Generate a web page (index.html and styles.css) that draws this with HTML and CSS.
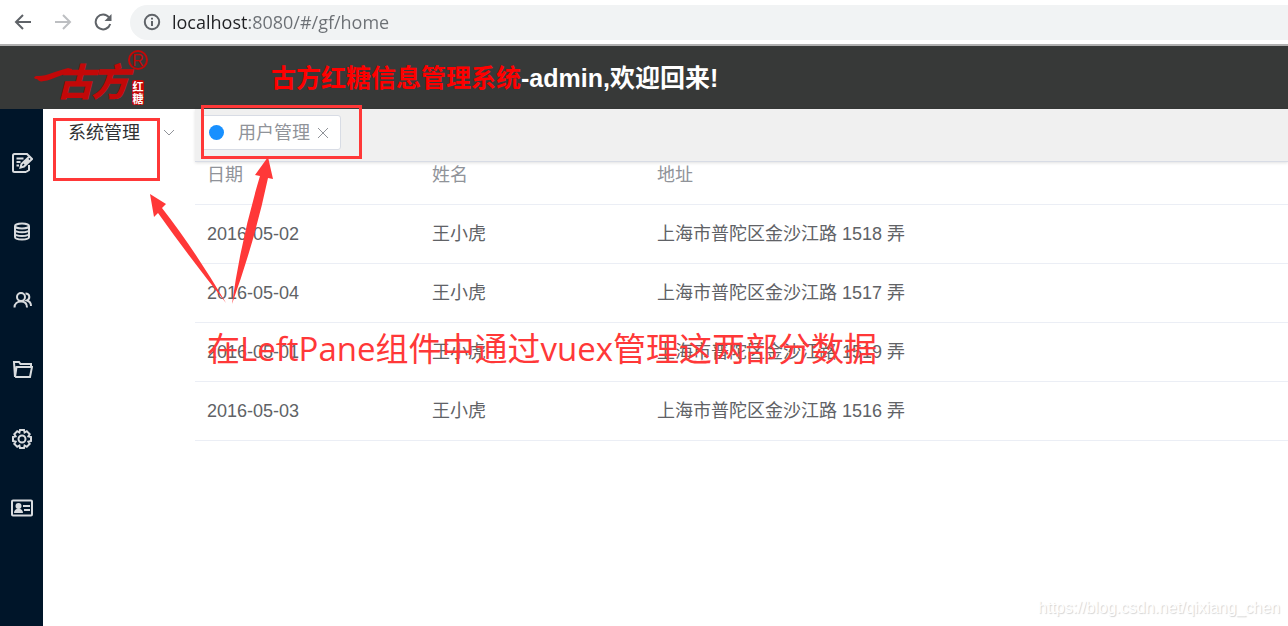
FILE: index.html
```
<!DOCTYPE html>
<html lang="zh-CN">
<head>
    <meta charset="UTF-8">
    <meta name="viewport" content="width=device-width, initial-scale=1.0">
    <title>古方红糖信息管理系统</title>
    <link rel="stylesheet" href="styles.css">
</head>
<body>
    <!-- 浏览器地址栏 -->
    <div class="browser-bar">
        <button class="nav-btn" type="button" aria-label="后退">
            <svg width="18" height="18" viewBox="0 0 18 18"><path d="M17 9H2M9 2L2 9l7 7"/></svg>
        </button>
        <button class="nav-btn nav-btn-off" type="button" aria-label="前进">
            <svg width="18" height="18" viewBox="0 0 18 18"><path d="M1 9h15M9 2l7 7-7 7"/></svg>
        </button>
        <button class="nav-btn" type="button" aria-label="刷新">
            <svg width="18" height="18" viewBox="0 0 18 18"><path d="M15 4.5A7.4 7.4 0 1 0 16.200 11"/><path class="solid" d="M17.500 1v7h-7z"/></svg>
        </button>
        <div class="address">
            <svg width="18" height="18" viewBox="0 0 18 18"><circle cx="9" cy="9" r="7.200"/><path d="M9 8v5M9 4.800v1.800"/></svg>
            <input class="address-input" type="text" aria-label="地址" value="localhost:8080/#/gf/home">
        </div>
    </div>

    <div class="header">
        <svg class="logo" width="124" height="60" viewBox="0 0 124 60" role="img" aria-label="古方红糖">
            <path d="M7 31c-3 0-4-2-1-3 10 1 19-5 32-8l4 1v4c-12 1-19 7-28 8-4 1-5 0-7-2z"/>
            <text class="logo-name" x="26" y="48">古</text>
            <text class="logo-name" x="61" y="48">方</text>
            <circle class="logo-ring" cx="108" cy="12" r="9"/>
            <text class="logo-reg" x="108" y="18">R</text>
            <rect x="102" y="32" width="12" height="25" rx="2"/>
            <text class="logo-seal" x="108" y="43">红</text>
            <text class="logo-seal" x="108" y="55">糖</text>
        </svg>
        <h1><span class="sys-name">古方红糖信息管理系统</span>-admin,欢迎回来!</h1>
    </div>

    <div class="container">
        <div class="side-bar">
            <button class="side-btn" type="button" aria-label="编辑">
                <svg width="22" height="22" viewBox="0 0 22 22"><path d="M15 20H3.500A1.500 1.500 0 0 1 2 18.500v-15A1.500 1.500 0 0 1 3.500 2H16l2 2M18 13v5l-3 2M5.500 6.500h7M5.500 10h4M5.500 13.500H8"/><path d="M9.500 15.500l1-3.500L18.500 4.500 21 7l-8 7.500zM13 12l5-4.500"/></svg>
            </button>
            <button class="side-btn" type="button" aria-label="数据">
                <svg width="22" height="22" viewBox="0 0 22 22"><ellipse cx="11" cy="5" rx="7" ry="2.500"/><path d="M4 5v11c0 3.300 14 3.300 14 0V5M4 8.700c0 3.300 14 3.300 14 0M4 12.400c0 3.300 14 3.300 14 0"/></svg>
            </button>
            <button class="side-btn" type="button" aria-label="用户">
                <svg width="22" height="22" viewBox="0 0 22 22"><circle cx="10" cy="7" r="4"/><path d="M3.500 17.500c0-4 3-6 6.500-6s6 2 6 6M14.500 3.500c4.500 0 5 5.500 1.500 7 2.500.8 4 3 4 5.500"/></svg>
            </button>
            <button class="side-btn" type="button" aria-label="文件夹">
                <svg width="22" height="22" viewBox="0 0 22 22"><path d="M4 18L3 3h5l1.500 2H20v3M4 18h15l2-10H5.500L4 18"/></svg>
            </button>
            <button class="side-btn" type="button" aria-label="设置">
                <svg width="22" height="22" viewBox="0 0 22 22"><path d="M9 2h4l.6 2.500 2.200-1.300 2.900 2.900-1.300 2.200L20 9v4l-2.600.7 1.300 2.200-2.900 2.900-2.200-1.300L13 20H9l-.6-2.500-2.200 1.300-2.900-2.900 1.300-2.200L2 13V9l2.600-.7-1.300-2.200 2.900-2.900 2.200 1.300z"/><circle cx="11" cy="11" r="3.500"/></svg>
            </button>
            <button class="side-btn" type="button" aria-label="名片">
                <svg width="22" height="22" viewBox="0 0 22 22"><rect x="1" y="3.500" width="20" height="15" rx="1"/><circle class="solid" cx="7.500" cy="9" r="3"/><path class="solid" d="M3 16c0-6 9-6 9 0z"/><path d="M12 9h7M13 13h6"/></svg>
            </button>
        </div>

        <div class="left-pane">
            <button class="menu-item" type="button">
                系统管理
                <svg width="12" height="12" viewBox="0 0 12 12"><path d="M1 3l5 5 5-5"/></svg>
            </button>
        </div>

        <div class="main">
            <div class="tabs">
                <div class="tab">
                    <span class="dot"></span>
                    <a href="#/gf/user">用户管理</a>
                    <button class="tab-close" type="button" aria-label="关闭">
                        <svg width="10" height="10" viewBox="0 0 10 10"><path d="M0 0l10 10M10 0L0 10"/></svg>
                    </button>
                </div>
            </div>
            <table class="data-table">
                <thead>
                    <tr><th class="col">日期</th><th class="col">姓名</th><th>地址</th></tr>
                </thead>
                <tbody>
                    <tr><td>2016-05-02</td><td>王小虎</td><td>上海市普陀区金沙江路 1518 弄</td></tr>
                    <tr><td>2016-05-04</td><td>王小虎</td><td>上海市普陀区金沙江路 1517 弄</td></tr>
                    <tr><td>2016-05-01</td><td>王小虎</td><td>上海市普陀区金沙江路 1519 弄</td></tr>
                    <tr><td>2016-05-03</td><td>王小虎</td><td>上海市普陀区金沙江路 1516 弄</td></tr>
                </tbody>
            </table>
        </div>
    </div>

    <!-- 标注 -->
    <div class="mark mark-menu"></div>
    <div class="mark mark-tab"></div>
    <svg class="arrows" width="130" height="150" viewBox="0 0 130 150">
        <path d="M0 39L16 49l-4 4q32 41 64 95Q40 103 8 58l-4 4z"/>
        <path d="M118 2l5 22-5-1Q105 85 82 149 91 84 110 21l-5-1z"/>
    </svg>
    <p class="mark-text">在LeftPane组件中通过vuex管理这两部分数据</p>
    <p class="watermark">https://blog.csdn.net/qixiang_chen</p>
</body>
</html>
```
FILE: styles.css
```
* {
    box-sizing: border-box;
}

body {
    position: relative;
    display: flex;
    flex-direction: column;
    min-height: 100vh;
    margin: 0;
    overflow-x: hidden;
    background-color: #fff;
    color: #606266;
    font-family: "Liberation Sans", "Noto Sans CJK SC", sans-serif;
    font-size: 18px;
    line-height: 24px;
}

button {
    padding: 0;
    border: none;
    background: none;
    color: inherit;
    font: inherit;
    cursor: pointer;
}

svg {
    flex: none;
    fill: none;
    stroke: currentColor;
}

.solid {
    fill: currentColor;
    stroke: none;
}

/* 地址栏 */
.browser-bar {
    display: flex;
    align-items: center;
    height: 46px;
    padding-left: 14px;
    border-bottom: 2px solid #b0b0b0;
    color: #5f6368;
}

.nav-btn {
    display: flex;
    width: 40px;
}

.nav-btn svg,
.address svg {
    stroke-width: 2;
}

.nav-btn-off {
    color: #bdbfc2;
}

.address {
    display: flex;
    flex: 1;
    align-items: center;
    gap: 11px;
    height: 35px;
    margin-left: -4px;
    padding-left: 13px;
    border-radius: 18px 0 0 18px;
    background-color: #f1f3f4;
}

.address-input {
    flex: 1;
    padding: 0;
    border: none;
    outline: none;
    background: linear-gradient(to right, #202124 77px, #6b6f74 77px);
    background-clip: text;
    -webkit-background-clip: text;
    color: transparent;
    font-family: "Open Sans", "Noto Sans", sans-serif;
    font-size: 18px;
}

/* 顶部 */
.header {
    display: flex;
    align-items: center;
    height: 63px;
    padding-left: 30px;
    background-color: #373938;
    color: #fff;
}

.header h1 {
    margin: 0 0 0 117px;
    font-size: 25px;
    line-height: 32px;
}

.sys-name {
    color: #f00;
}

.logo {
    fill: #c30808;
    stroke: none;
    font-weight: bold;
}

.logo-name {
    font-size: 38px;
    font-style: italic;
    font-weight: 900;
}

.logo-ring {
    fill: none;
    stroke: #c30808;
    stroke-width: 2;
}

.logo-reg {
    font-size: 16px;
    font-weight: normal;
    text-anchor: middle;
}

.logo-seal {
    fill: #fff;
    font-size: 11px;
    text-anchor: middle;
}

.container {
    display: flex;
    flex: 1;
}

/* 左侧图标 */
.side-bar {
    display: flex;
    flex-direction: column;
    width: 43px;
    padding-top: 19px;
    background-color: #001529;
    color: #d9dcdf;
}

.side-btn {
    display: flex;
    align-items: center;
    justify-content: center;
    height: 69px;
}

.side-btn svg {
    stroke-width: 2;
}

.left-pane {
    width: 152px;
    padding: 12px 20px 0 25px;
}

.menu-item {
    display: flex;
    align-items: center;
    justify-content: space-between;
    width: 100%;
    color: #303133;
}

.menu-item svg {
    color: #909399;
}

.main {
    flex: 1;
}

/* 标签页 */
.tabs {
    height: 53px;
    padding: 6px;
    border-bottom: 1px solid #d8dce5;
    background-color: #f0f0f0;
    box-shadow: 0 1px 3px rgba(0, 0, 0, 0.12);
}

.tab {
    display: inline-flex;
    align-items: center;
    height: 35px;
    padding: 0 12px 0 7px;
    border: 1px solid #d8dce5;
    border-radius: 3px;
    background-color: #fff;
    color: #909399;
}

.tab a {
    margin: 0 8px 0 14px;
    color: inherit;
    text-decoration: none;
}

.dot {
    width: 15px;
    height: 15px;
    border-radius: 50%;
    background-color: #1890ff;
}

.tab-close {
    display: flex;
}

/* 表格 */
.data-table {
    width: 100%;
    border-collapse: collapse;
    table-layout: fixed;
}

.data-table th,
.data-table td {
    padding: 17px 12px;
    border-bottom: 1px solid #ebeef5;
    text-align: left;
}

.data-table th {
    padding-top: 1px;
    color: #909399;
    font-weight: normal;
}

.data-table .col {
    width: 225px;
}

/* 标注层 */
.mark {
    position: absolute;
    border: 3px solid #ff3838;
}

.mark-menu {
    top: 118px;
    left: 53px;
    width: 107px;
    height: 63px;
}

.mark-tab {
    top: 105px;
    left: 201px;
    width: 161px;
    height: 54px;
}

.arrows {
    position: absolute;
    top: 155px;
    left: 150px;
    fill: #ff3838;
    stroke: none;
}

.mark-text {
    position: absolute;
    top: 329px;
    left: 207px;
    margin: 0;
    color: #ff3838;
    font-family: "Open Sans", "Noto Sans CJK SC", sans-serif;
    font-size: 33px;
    line-height: 40px;
    white-space: nowrap;
}

.watermark {
    position: absolute;
    right: 8px;
    bottom: 6px;
    margin: 0;
    color: #fff;
    font-size: 16px;
    text-shadow: 1px 1px 1px #d4d4d4;
}
```
